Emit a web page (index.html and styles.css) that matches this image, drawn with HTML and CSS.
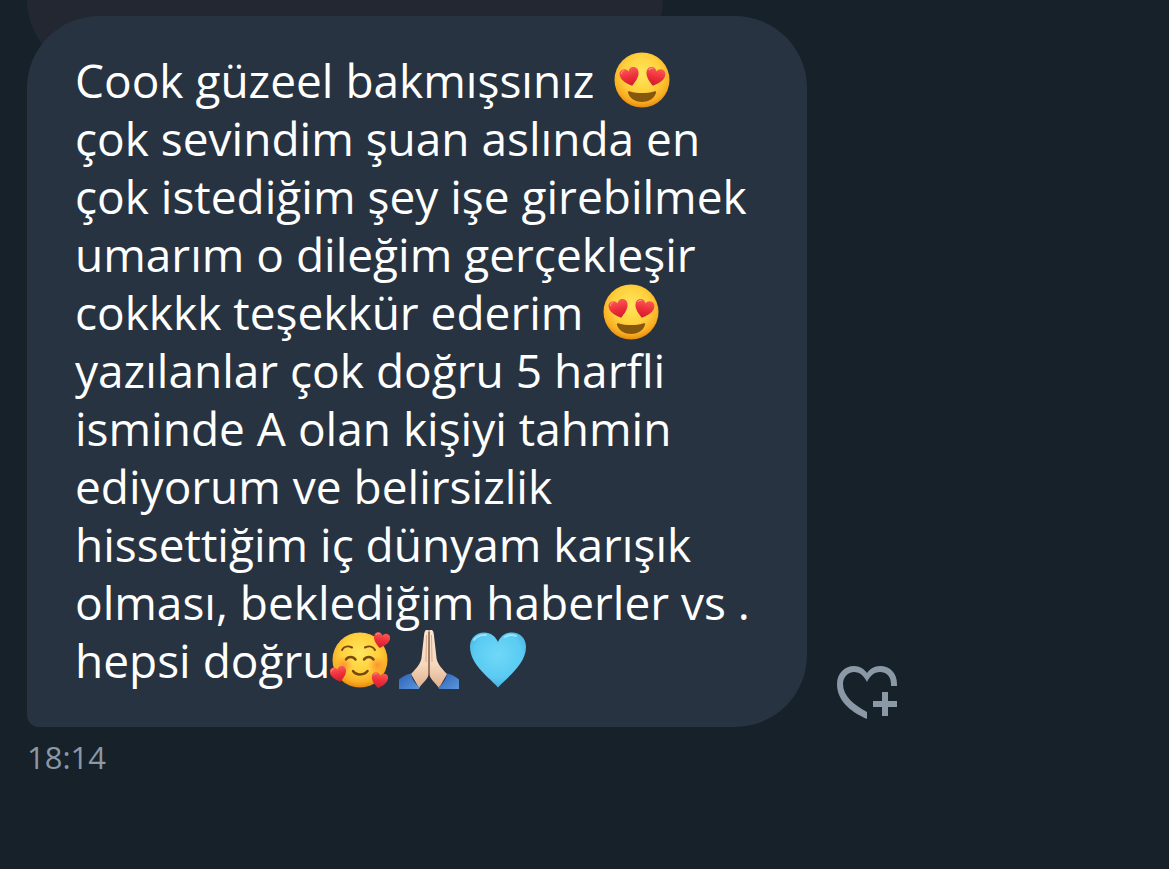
FILE: index.html
```html
<!DOCTYPE html>
<html lang="tr">
<head>
    <meta charset="UTF-8">
    <meta name="viewport" content="width=device-width, initial-scale=1.0">
    <title>Mesajlar</title>
    <link rel="stylesheet" href="styles.css">
</head>
<body>
    <!-- Shared emoji drawings -->
    <svg class="sprite" aria-hidden="true">
        <defs>
            <radialGradient id="face" cx="50%" cy="38%" r="62%">
                <stop offset="0" stop-color="#ffe65e"/>
                <stop offset="0.55" stop-color="#ffd03c"/>
                <stop offset="0.85" stop-color="#f9ad22"/>
                <stop offset="1" stop-color="#e68a0c"/>
            </radialGradient>
            <linearGradient id="red" x1="0" y1="0" x2="0" y2="1">
                <stop offset="0" stop-color="#fa5a55"/>
                <stop offset="0.5" stop-color="#ee2f3a"/>
                <stop offset="1" stop-color="#cf1c2e"/>
            </linearGradient>
            <radialGradient id="blue" cx="50%" cy="40%" r="60%">
                <stop offset="0" stop-color="#70d8f8"/>
                <stop offset="0.7" stop-color="#5acbf2"/>
                <stop offset="1" stop-color="#46b4e2"/>
            </radialGradient>
            <linearGradient id="skin" x1="0" y1="0" x2="0" y2="1">
                <stop offset="0" stop-color="#fbe6d0"/>
                <stop offset="0.6" stop-color="#f6d8bd"/>
                <stop offset="1" stop-color="#dfae8c"/>
            </linearGradient>
            <linearGradient id="sleeve" x1="0" y1="0" x2="1" y2="1">
                <stop offset="0" stop-color="#2c62b4"/>
                <stop offset="1" stop-color="#5b96dd"/>
            </linearGradient>
            <radialGradient id="blush">
                <stop offset="0" stop-color="#fb7a2c" stop-opacity="0.7"/>
                <stop offset="1" stop-color="#fb8a2c" stop-opacity="0"/>
            </radialGradient>
        </defs>
        <symbol id="heart" viewBox="0 0 20 20">
            <path fill="url(#red)" d="M10 19C6 16 1 12 .5 7 0 3 2.500 1 5.200 1 7.500 1 9 2.200 10 4.200 11 2.200 12.500 1 14.800 1 17.500 1 20 3 19.500 7 19 12 14 16 10 19z"/>
            <path fill="none" stroke="#ff9a92" stroke-width="1" stroke-linecap="round" d="M2.500 4.500C3 3 4 2.300 5.500 2.300"/>
        </symbol>
        <symbol id="heart-eyes" viewBox="0 0 60 60">
            <circle cx="30" cy="30" r="27.500" fill="url(#face)"/>
            <use href="#heart" x="8" y="17" width="20" height="20" transform="rotate(-14 18 27)"/>
            <use href="#heart" x="33" y="17" width="20" height="20" transform="rotate(14 43 27)"/>
            <path fill="#86580f" d="M16 43C15.500 41.500 16.500 41 18 41.500 25 43.500 35 43.500 42 41.500 43.500 41 44.500 41.500 44 43 42 49 36 52 30 52S18 49 16 43z"/>
        </symbol>
        <symbol id="smiling-hearts" viewBox="0 0 60 60">
            <circle cx="30" cy="30" r="27.500" fill="url(#face)"/>
            <circle cx="14" cy="35" r="9" fill="url(#blush)"/>
            <circle cx="47" cy="35" r="9" fill="url(#blush)"/>
            <g fill="none" stroke="#75480d" stroke-linecap="round">
                <path stroke-width="2" d="M12 20C14 16.500 18 15.500 22 17.500M35 17.500C39 15.500 43 16.500 45 20"/>
                <path stroke-width="2.500" d="M16 29.500C18 26 23 26 25.500 29.500M34 29.500C36.500 26 41 26 43.500 29.500"/>
                <path stroke-width="2.500" d="M23 41C26 45.500 34 45.500 37.500 41"/>
            </g>
            <use href="#heart" x="43" y="2" width="17" height="17" transform="rotate(12 51 10)"/>
            <use href="#heart" x="0" y="36" width="17" height="17" transform="rotate(-12 8 44)"/>
            <use href="#heart" x="41" y="42" width="17" height="17" transform="rotate(10 49 50)"/>
        </symbol>
        <symbol id="pray" viewBox="0 0 60 60">
            <path fill="url(#skin)" d="M29.700 0C27 -1 25.500 1 25.200 4L22.500 28C22 32 19 37 12 44L20 58C24 52 29.700 49 29.700 43z"/>
            <path fill="url(#sleeve)" d="M0 49.500C4 46 8 44 12 43.500 13 49 16 54 20.500 57L20 59H0z"/>
            <path fill="url(#skin)" d="M30.300 0C33 -1 34.500 1 34.800 4L37.500 28C38 32 41 37 48 44L40 58C36 52 30.300 49 30.300 43z"/>
            <path fill="url(#sleeve)" d="M60 49.500C56 46 52 44 48 43.500 47 49 44 54 39.500 57L40 59H60z"/>
            <path fill="none" stroke="#8a5a40" stroke-width="1.200" d="M30 2V45"/>
            <path fill="none" stroke="#d9ab8a" stroke-width="1" d="M27.500 5L27 32M32.500 5L33 32"/>
        </symbol>
        <symbol id="blue-heart" viewBox="0 0 60 60">
            <path fill="url(#blue)" d="M30 57.500C23 49 2 35 2 17 2 8 8 2.500 16 2.500 23 2.500 27.500 6.500 30 12 32.500 6.500 37 2.500 44 2.500 52 2.500 58 8 58 17 58 35 37 49 30 57.500z"/>
            <path fill="none" stroke="#b5f0ff" stroke-width="2" stroke-linecap="round" opacity="0.7" d="M6 10C9 5.500 13 4.500 18 5M37 7C40 5 44 4.500 48 6"/>
        </symbol>
    </svg>

    <main class="chat">
        <div class="bubble-previous"></div>
        <div class="message">
            <p class="bubble">
                Cook güzeel bakmışsınız <svg class="emoji" role="img" aria-label="😍"><use href="#heart-eyes"/></svg><br>
                çok sevindim şuan aslında en<br>
                çok istediğim şey işe girebilmek<br>
                umarım o dileğim gerçekleşir<br>
                cokkkk teşekkür ederim <svg class="emoji" role="img" aria-label="😍"><use href="#heart-eyes"/></svg><br>
                yazılanlar çok doğru 5 harfli<br>
                isminde A olan kişiyi tahmin<br>
                ediyorum ve belirsizlik<br>
                hissettiğim iç dünyam karışık<br>
                olması, beklediğim haberler vs .<br>
                hepsi doğru<span class="emojis"><svg class="emoji" role="img" aria-label="🥰"><use href="#smiling-hearts"/></svg><svg class="emoji" role="img" aria-label="🙏🏻"><use href="#pray"/></svg><svg class="emoji" role="img" aria-label="🩵"><use href="#blue-heart"/></svg></span>
            </p>
            <button class="react" type="button" aria-label="Tepki ekle">
                <svg class="react-icon" viewBox="0 0 60 53">
                    <path d="M60 20H54V18C54 10 49 6 43 6 37 6 33 10 30 16 27 10 23 6 17 6 11 6 6 11 6 18 6 30 17 39 30 46V53C12 45 0 34 0 18 0 7 8 0 17 0 23 0 27 3 30 7 33 3 37 0 43 0 53 0 60 7 60 18z"/>
                    <path d="M45 26h6v9h9v6h-9v9h-6v-9h-9v-6h9z"/>
                </svg>
            </button>
        </div>
        <time class="time" datetime="18:14">18:14</time>
    </main>
</body>
</html>
```
FILE: styles.css
```css
* {
    margin: 0;
    padding: 0;
    box-sizing: border-box;
}

body {
    min-height: 100vh;
    background: #17212a;
    color: #ffffff;
    font-family: "Open Sans", "Noto Sans", sans-serif;
    overflow-x: hidden;
}

.sprite {
    position: absolute;
    width: 0;
    height: 0;
}

.chat {
    padding: 0 27px;
}

/* End of the message above */
.bubble-previous {
    width: 57%;
    height: 72px;
    margin-bottom: -56px;
    border-radius: 0 0 72px 72px;
    background: #222732;
}

.message {
    position: relative;
    display: flex;
    align-items: flex-end;
    gap: 30px;
}

.bubble {
    flex: 0 1 780px;
    padding: 35px 48px 38px;
    border-radius: 72px 72px 72px 12px;
    background: #283341;
    font-size: 46px;
    line-height: 58px;
    white-space: nowrap;
}

/* Emoji */
.emoji {
    width: 60px;
    height: 60px;
    margin: -8px 0 -8px 6px;
    vertical-align: -4px;
}

.emojis .emoji {
    margin-left: 0;
}

.emojis .emoji + .emoji {
    margin-left: 9px;
}

/* Reaction button */
.react {
    margin-bottom: 8px;
    border: none;
    background: none;
    cursor: pointer;
}

.react-icon {
    display: block;
    width: 60px;
    height: 53px;
    fill: #8b98a5;
}

.time {
    display: block;
    margin-top: 10px;
    color: #8b98a5;
    font-size: 31px;
    line-height: 40px;
}
```
